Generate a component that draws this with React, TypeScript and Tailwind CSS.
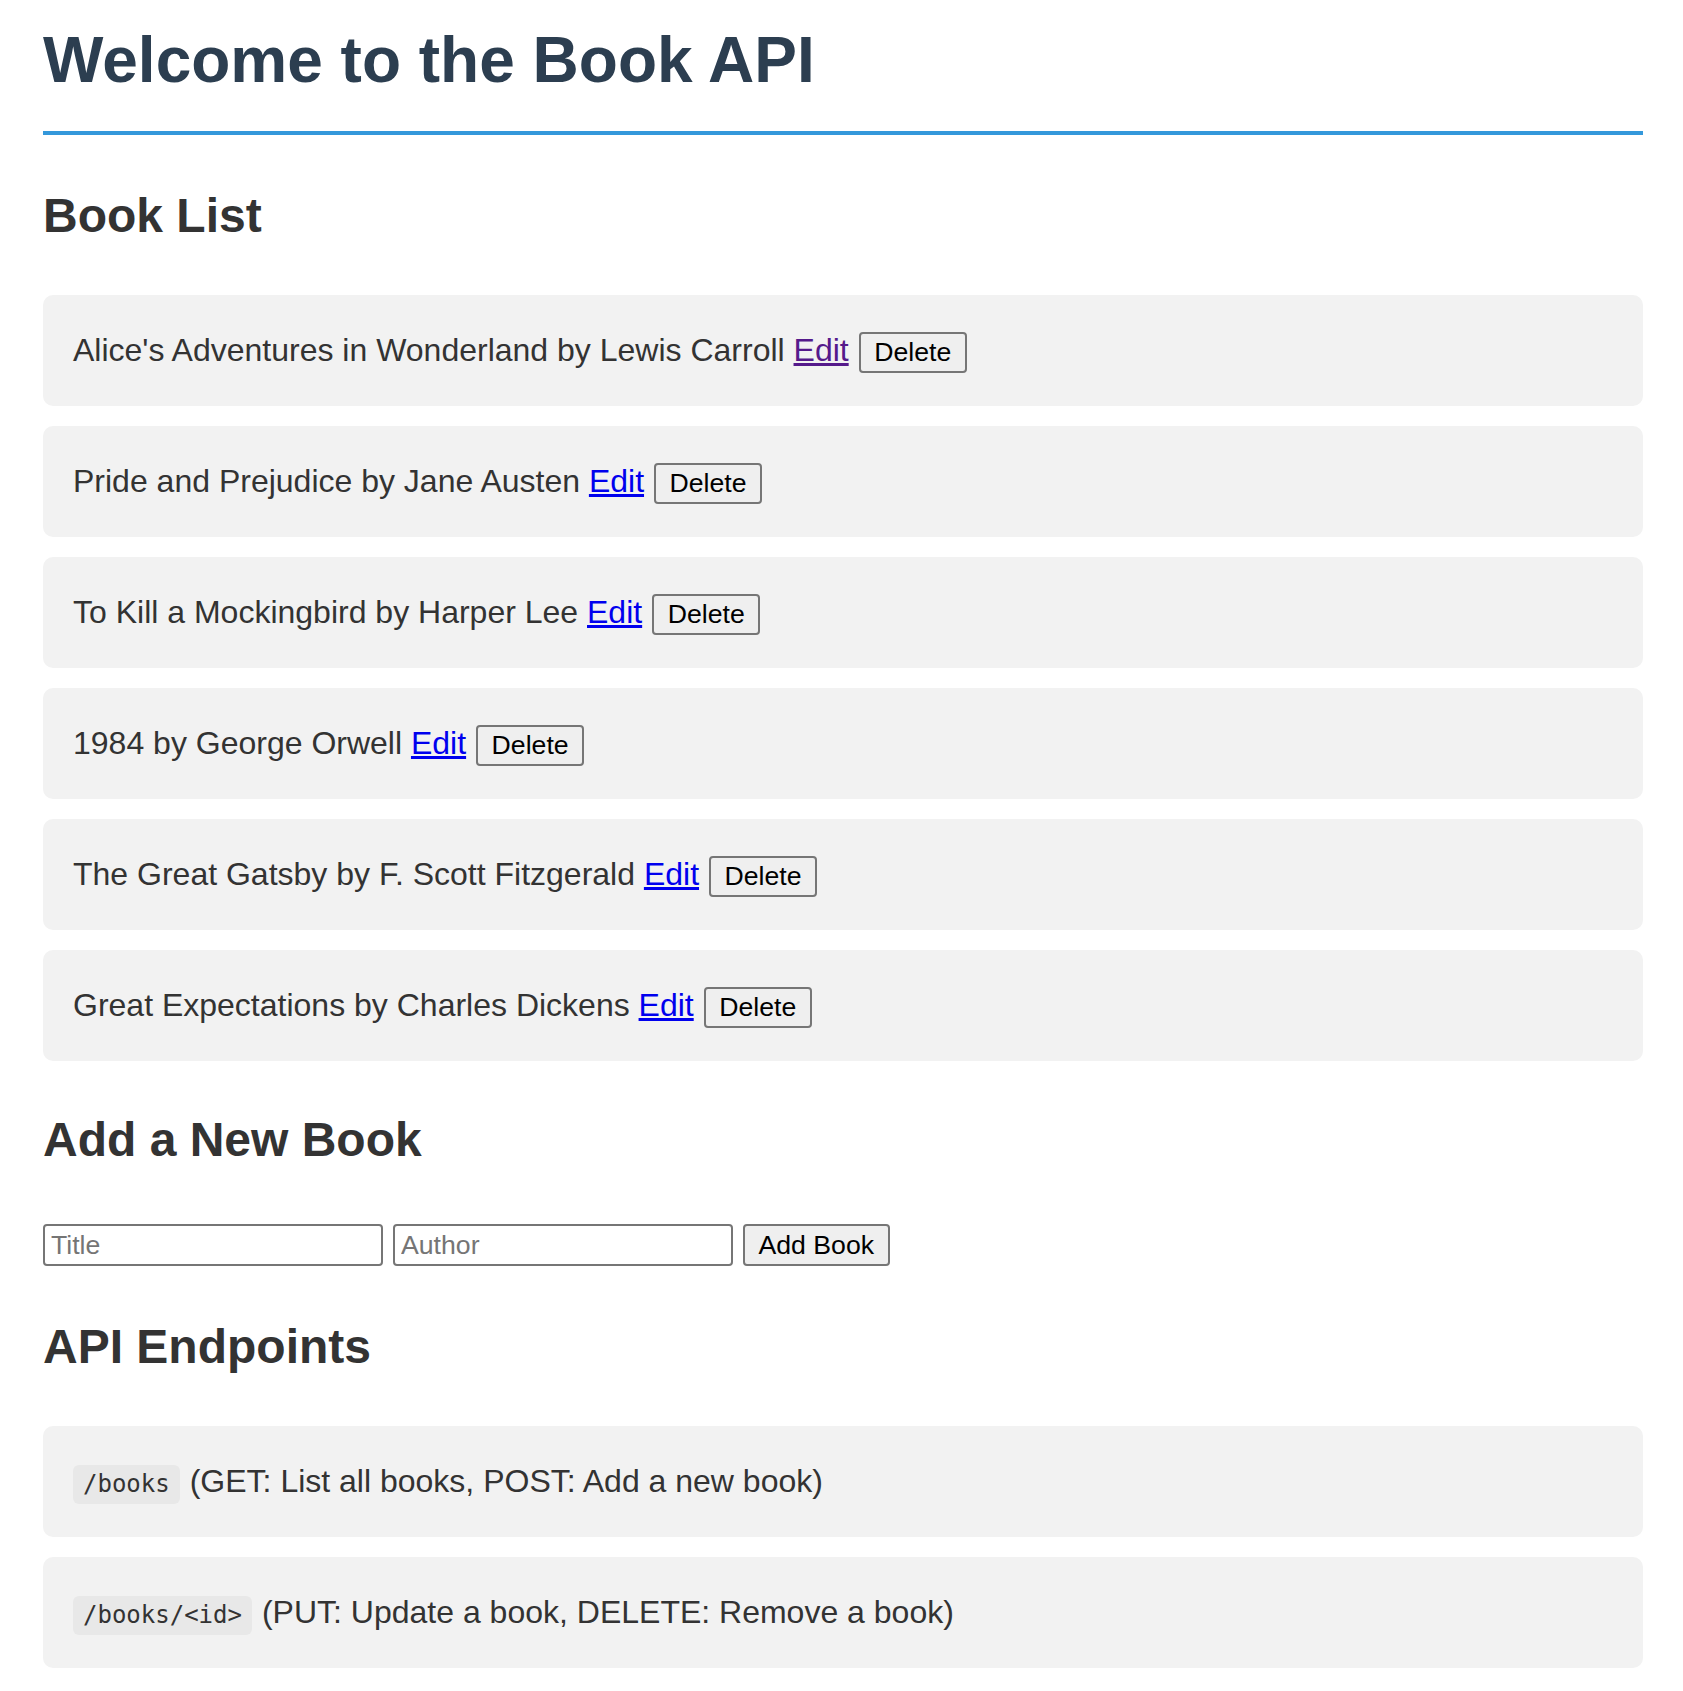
import React from "react";

const books = [
  { title: "Alice's Adventures in Wonderland", author: "Lewis Carroll", visited: true },
  { title: "Pride and Prejudice", author: "Jane Austen" },
  { title: "To Kill a Mockingbird", author: "Harper Lee" },
  { title: "1984", author: "George Orwell" },
  { title: "The Great Gatsby", author: "F. Scott Fitzgerald" },
  { title: "Great Expectations", author: "Charles Dickens" },
];

const endpoints = [
  { path: "/books", desc: "(GET: List all books, POST: Add a new book)" },
  { path: "/books/<id>", desc: "(PUT: Update a book, DELETE: Remove a book)" },
];

export default function App() {
  return (
    <div
      className="min-h-[1691px] bg-white pl-[43px] pr-[40px] pb-[23px] text-[#333333]"
      style={{ fontFamily: '"Liberation Sans", Arial, sans-serif' }}
    >
      <h1 className="mt-[23px] border-b-4 border-[#3498db] pb-[34px] text-[64px] font-bold leading-[74px] text-[#2c3e50]">
        Welcome to the Book API
      </h1>

      <h2 className="mt-[53px] text-[48px] font-bold leading-[56px]">Book List</h2>
      <ul className="mt-[51px] flex flex-col gap-[20px]">
        {books.map((b) => (
          <li
            key={b.title}
            className="rounded-[10px] bg-[#f2f2f2] p-[30px] text-[32px] leading-[51px]"
          >
            {b.title} by {b.author}{" "}
            <a
              href="#"
              className={
                "underline " + (b.visited ? "text-[#551a8b]" : "text-[#0000ee]")
              }
            >
              Edit
            </a>
            <button className="ml-[10px] inline-block h-[41px] cursor-pointer rounded-[4px] border-2 border-[#767676] bg-[#efefef] px-[13.5px] py-[3px] align-baseline text-[26.67px] leading-[normal] text-black">
              Delete
            </button>
          </li>
        ))}
      </ul>

      <h2 className="mt-[51px] text-[48px] font-bold leading-[56px]">Add a New Book</h2>
      <div className="mt-[56px] flex gap-[10px]">
        <input
          placeholder="Title"
          className="h-[42px] w-[340px] rounded-[4px] border-2 border-[#767676] bg-white px-[6px] text-[26.67px] text-black placeholder:text-[#757575]"
        />
        <input
          placeholder="Author"
          className="h-[42px] w-[340px] rounded-[4px] border-2 border-[#767676] bg-white px-[6px] text-[26.67px] text-black placeholder:text-[#757575]"
        />
        <button className="h-[42px] cursor-pointer rounded-[4px] border-2 border-[#767676] bg-[#efefef] px-[13.5px] text-[26.67px] leading-[normal] text-black">
          Add Book
        </button>
      </div>

      <h2 className="mt-[53px] text-[48px] font-bold leading-[56px]">API Endpoints</h2>
      <ul className="mt-[51px] flex flex-col gap-[20px]">
        {endpoints.map((e) => (
          <li
            key={e.path}
            className="rounded-[10px] bg-[#f2f2f2] p-[30px] text-[32px] leading-[51px]"
          >
            <code
              className="mr-[10px] inline-block h-[39px] rounded-[6px] bg-[#e8e8e8] px-[10px] align-baseline text-[24px] leading-[39px]"
              style={{ fontFamily: '"DejaVu Sans Mono", monospace' }}
            >
              {e.path}
            </code>
            {e.desc}
          </li>
        ))}
      </ul>
    </div>
  );
}
